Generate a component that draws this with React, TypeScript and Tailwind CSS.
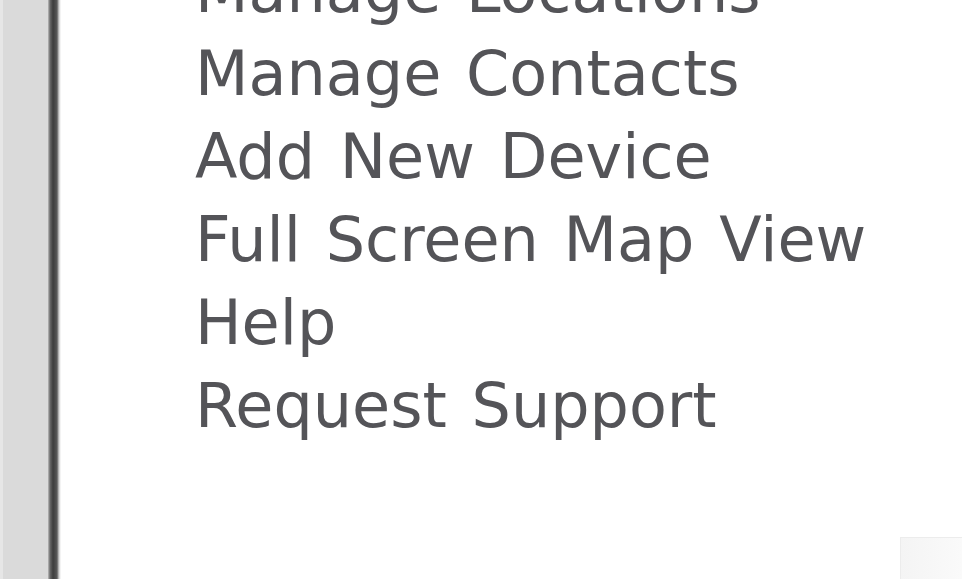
import React from "react";

const items = [
  "Manage Locations",
  "Manage Contacts",
  "Add New Device",
  "Full Screen Map View",
  "Help",
  "Request Support",
];

export default function App() {
  return (
    <div className="flex h-[579px] w-[962px] overflow-hidden bg-white">
      <div className="flex h-full w-[48px] shrink-0">
        <div className="w-[3px] bg-[#e6e6e6]" />
        <div className="flex-1 bg-[#dadada]" />
      </div>
      <div className="h-full w-[13px] shrink-0 bg-[linear-gradient(to_right,#bdbdbd_0px,#6a6a6a_2px,#3e3e3e_5px,#4a4a4a_7px,#5a5a5a_9px,#cfcfcf_11px,#ffffff_13px)]" />
      <div className="flex h-full flex-1 flex-col">
        <ul
          className="mt-[-51px] pl-[134px] text-[62px] leading-[83px] text-[#545458] [word-spacing:5px]"
          style={{ fontFamily: '"DejaVu Sans", Verdana, sans-serif' }}
        >
          {items.map((t) => (
            <li key={t} className="whitespace-nowrap">
              {t}
            </li>
          ))}
        </ul>
        <div className="mt-auto flex justify-end">
          <div className="h-[42px] w-[62px] border-l border-t border-[#ececec] bg-[linear-gradient(to_right,#f4f4f4,#fafafa)]" />
        </div>
      </div>
    </div>
  );
}
